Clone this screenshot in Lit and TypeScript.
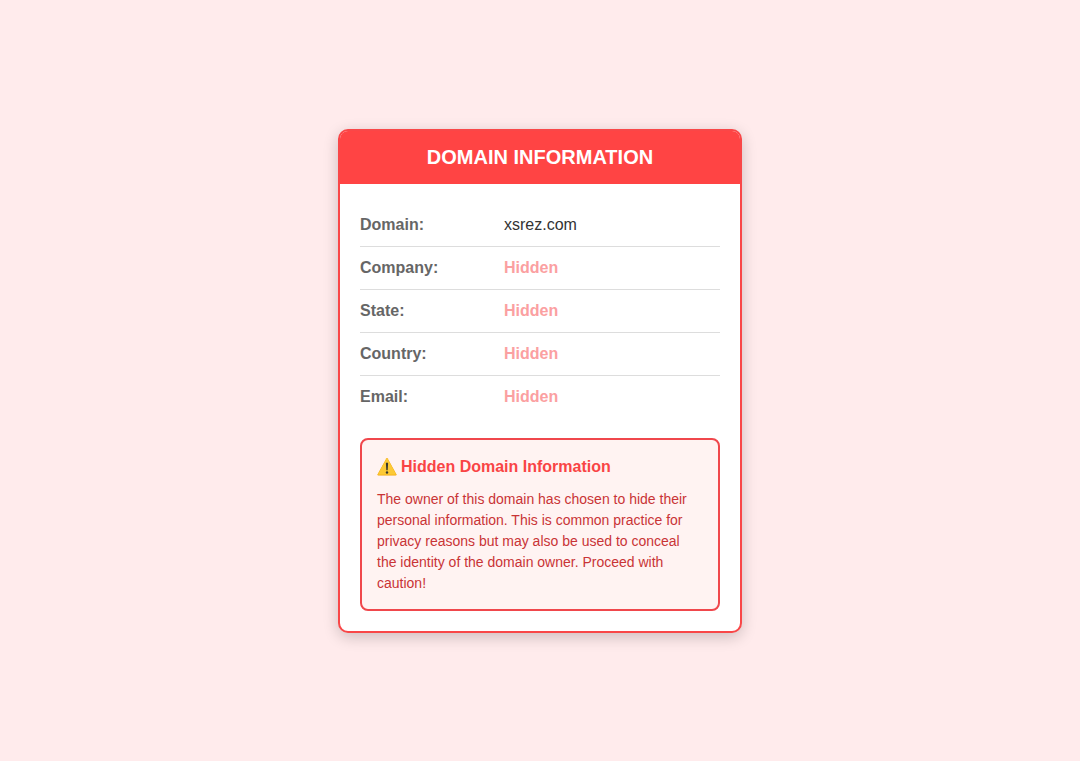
import { LitElement, html, css } from "lit";
import { customElement, state } from "lit/decorators.js";

interface Field {
  label: string;
  value: string;
  hidden: boolean;
}

@customElement("app-root")
export class AppRoot extends LitElement {
  static styles = css`
    :host {
      display: flex;
      align-items: center;
      justify-content: center;
      min-height: 100vh;
      background: #ffebec;
      color: #333;
      font-family: "Liberation Sans", Arial, sans-serif;
      font-size: 16px;
    }
    .card {
      box-sizing: border-box;
      width: 100%;
      max-width: 404px;
      background: #fff;
      border: 2px solid #f94748;
      border-radius: 10px;
      box-shadow: 0 4px 15px rgba(0, 0, 0, 0.2);
      overflow: hidden;
    }
    .title {
      margin: 0;
      padding: 15px;
      background: #ff4444;
      color: #fff;
      font-size: 20px;
      line-height: 23px;
      text-align: center;
      text-transform: uppercase;
    }
    .body {
      padding: 20px;
    }
    .fields {
      margin: 0;
    }
    .row {
      display: flex;
      padding: 12px 0;
      line-height: 18px;
      border-bottom: 1px solid #ddd;
    }
    .row:last-child {
      border-bottom: none;
    }
    .label {
      flex: 0 0 40%;
      font-weight: bold;
      color: #666;
    }
    .value {
      flex: 1;
      margin: 0;
    }
    .concealed {
      font-weight: bold;
      color: #fba0a1;
    }
    .warning {
      margin-top: 20px;
      padding: 15px;
      background: #fff3f2;
      border: 2px solid #f0474c;
      border-radius: 8px;
    }
    .heading {
      display: flex;
      align-items: center;
      gap: 4px;
      margin: 0 0 10px;
      color: #f94445;
      font-size: 16px;
      line-height: 24px;
    }
    .icon {
      width: 20px;
      height: 20px;
    }
    .text {
      margin: 0;
      color: #c93436;
      font-size: 14px;
      line-height: 21px;
    }
  `;

  @state() private fields: Field[] = [
    { label: "Domain", value: "xsrez.com", hidden: false },
    { label: "Company", value: "Hidden", hidden: true },
    { label: "State", value: "Hidden", hidden: true },
    { label: "Country", value: "Hidden", hidden: true },
    { label: "Email", value: "Hidden", hidden: true },
  ];

  render() {
    return html`
      <main class="card">
        <h1 class="title">Domain Information</h1>
        <div class="body">
          <dl class="fields">
            ${this.fields.map(
              (f) => html`<div class="row">
                <dt class="label">${f.label}:</dt>
                <dd class="value ${f.hidden ? "concealed" : ""}">${f.value}</dd>
              </div>`,
            )}
          </dl>
          <section class="warning">
            <h2 class="heading">
              <svg class="icon" viewBox="0 0 20 20" aria-hidden="true">
                <path d="M9.3 1.4Q10 .4 10.7 1.4L19.4 17.2Q19.8 18.6 18.6 18.6H1.4Q.2 18.6.6 17.2Z" fill="#f2a600" />
                <path d="M9.4 1.8Q10 1 10.6 1.8L18.9 16.9Q19.2 17.8 18.3 17.8H1.7Q.8 17.8 1.1 16.9Z" fill="#fcc936" />
                <path d="M8.9 6.2Q10 5 11.1 6.2L10.7 13.2H9.3Z" fill="#35352f" />
                <circle cx="10" cy="15.5" r="1.2" fill="#35352f" />
              </svg>
              Hidden Domain Information
            </h2>
            <p class="text">
              The owner of this domain has chosen to hide their personal information. This is common practice for
              privacy reasons but may also be used to conceal the identity of the domain owner. Proceed with caution!
            </p>
          </section>
        </div>
      </main>
    `;
  }
}
